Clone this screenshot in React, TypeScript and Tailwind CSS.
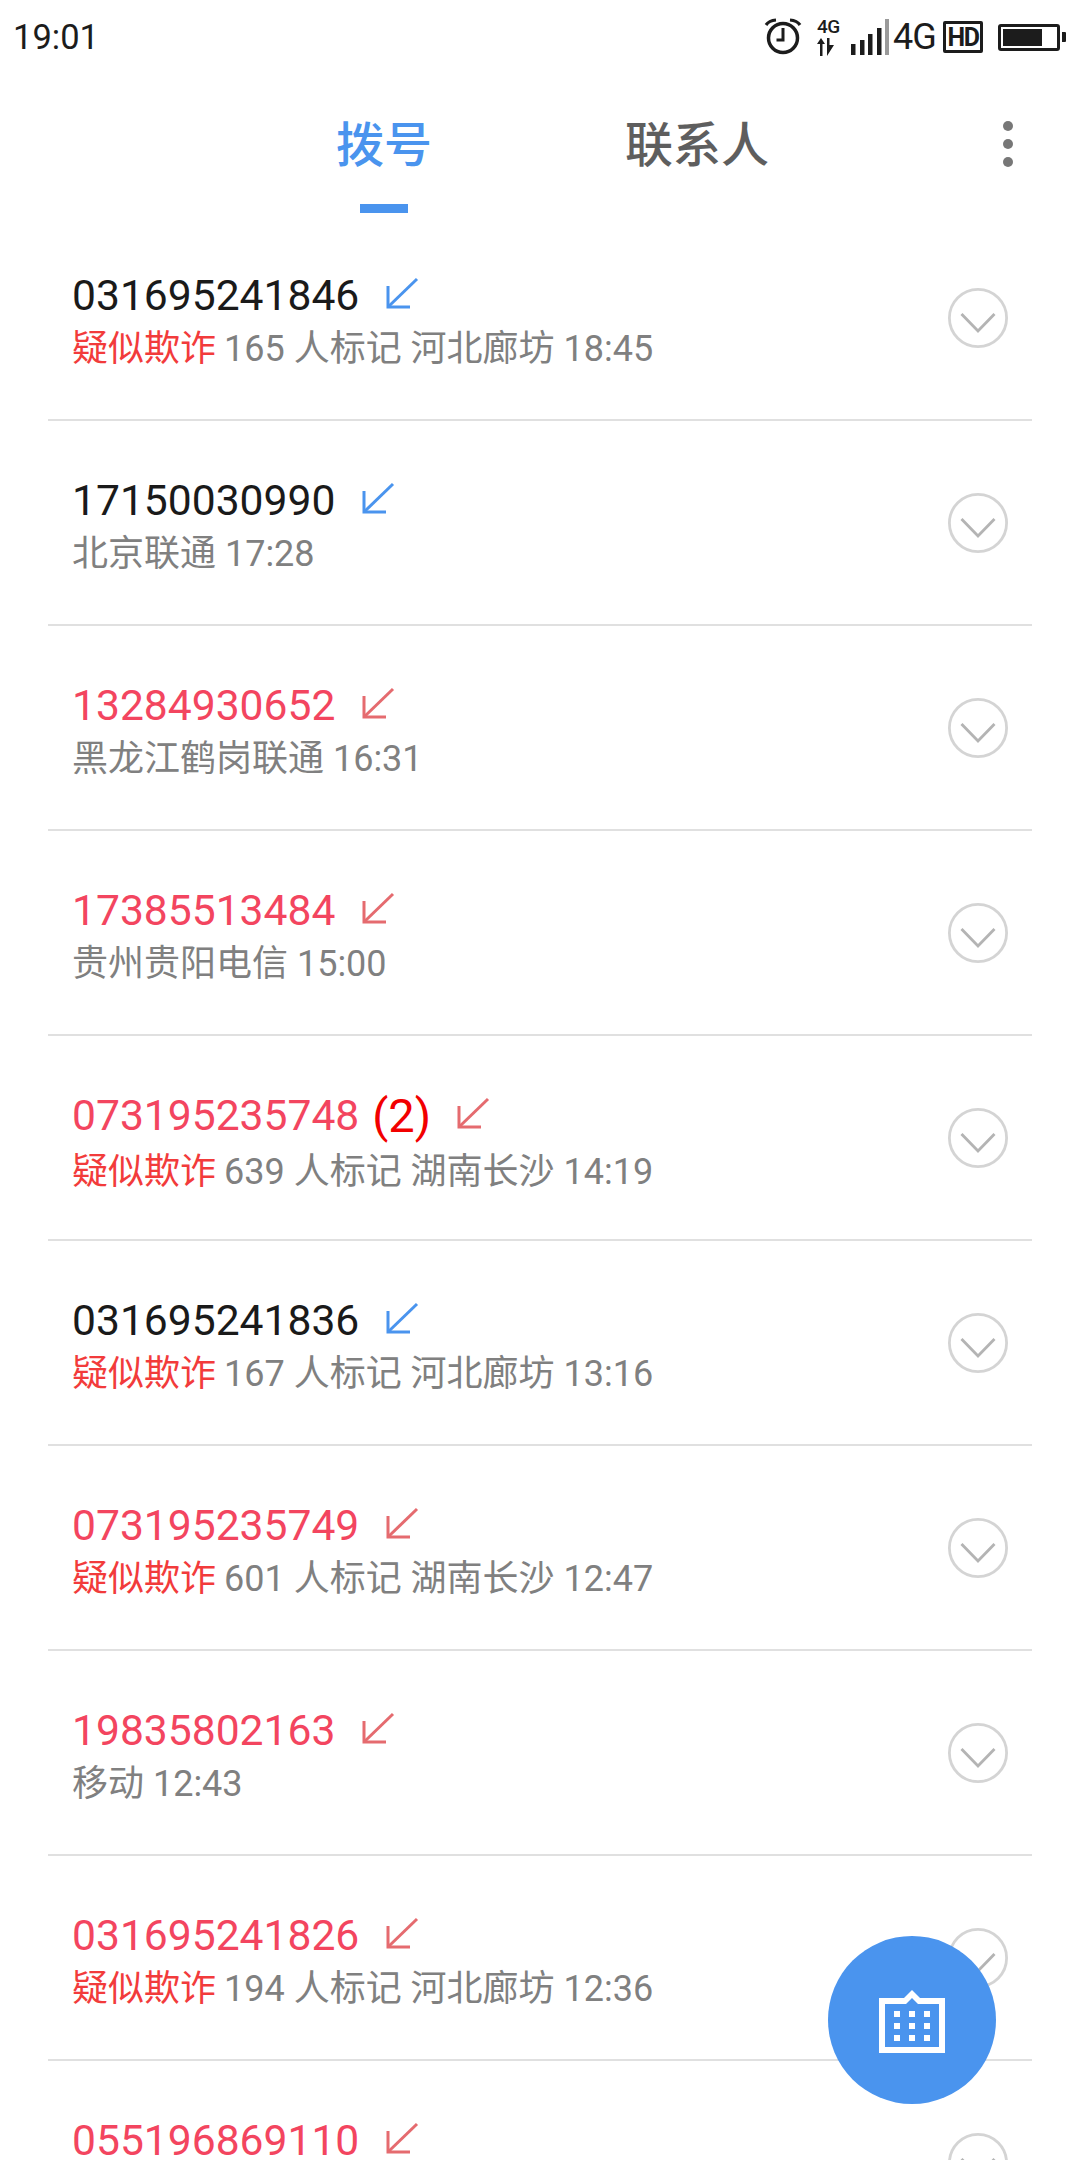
const calls = [
  { num: '031695241846', missed: false, fraud: true, sub: '165 人标记 河北廊坊 18:45' },
  { num: '17150030990', missed: false, sub: '北京联通 17:28' },
  { num: '13284930652', missed: true, sub: '黑龙江鹤岗联通 16:31' },
  { num: '17385513484', missed: true, sub: '贵州贵阳电信 15:00' },
  { num: '073195235748', missed: true, count: 2, fraud: true, sub: '639 人标记 湖南长沙 14:19' },
  { num: '031695241836', missed: false, fraud: true, sub: '167 人标记 河北廊坊 13:16' },
  { num: '073195235749', missed: true, fraud: true, sub: '601 人标记 湖南长沙 12:47' },
  { num: '19835802163', missed: true, sub: '移动 12:43' },
  { num: '031695241826', missed: true, fraud: true, sub: '194 人标记 河北廊坊 12:36' },
  { num: '055196869110', missed: true, sub: '' },
];

function Arrow({ color }: { color: string }) {
  return (
    <svg width="34" height="34" viewBox="0 0 34 34" fill="none" stroke={color} strokeWidth="3">
      <path d="M32 3 L3 31" />
      <path d="M3 10 V31 H25" />
    </svg>
  );
}

function Chevron() {
  return (
    <svg width="60" height="60" viewBox="0 0 60 60" fill="none">
      <circle cx="30" cy="30" r="28.6" stroke="#d4d4d4" strokeWidth="2.8" />
      <path d="M13.5 26 L30 43 L46.5 26" stroke="#b4b4b4" strokeWidth="2.8" />
    </svg>
  );
}

function StatusIcons() {
  return (
    <div className="flex items-center text-[#1c1c1c]">
      <svg width="38" height="38" viewBox="0 0 38 38" fill="none" stroke="#1c1c1c" className="mr-[15px]">
        <circle cx="19" cy="20" r="14.5" strokeWidth="3.5" />
        <path d="M19 10 V22 H12.5" strokeWidth="3" />
        <path d="M2 7 Q5 2.5 12 2" strokeWidth="3.2" />
        <path d="M36 7 Q33 2.5 26 2" strokeWidth="3.2" />
      </svg>
      <div className="flex flex-col items-start w-[25px] mr-[9px]">
        <span className="text-[19px] leading-[17px] font-medium tracking-[-0.5px]">4G</span>
        <svg width="18" height="18" viewBox="0 0 18 18" fill="#1c1c1c" className="mt-[3px]">
          <path d="M4 0 L8 6 H5.5 V18 H3 V6 H0 Z" />
          <path d="M10 0 H12.5 V7 H17 L10 18 Z" />
        </svg>
      </div>
      <svg width="38" height="36" viewBox="0 0 38 36" fill="#1c1c1c" className="mr-[4px]">
        <rect x="0" y="25" width="4.5" height="11" />
        <rect x="9" y="21" width="4.5" height="15" />
        <rect x="17" y="15" width="4.5" height="21" />
        <rect x="26" y="9" width="4.5" height="27" />
        <rect x="34" y="0" width="4" height="36" fill="#9a9a9a" />
      </svg>
      <span className="text-[36px] leading-[36px] font-normal w-[45px] tracking-[-1px]">4G</span>
      <div className="ml-[5px] w-[40px] h-[32px] border-[3px] border-[#1c1c1c] rounded-[2px] flex items-center justify-center text-[25px] leading-none font-bold tracking-[-1.5px]">
        HD
      </div>
      <div className="ml-[15px] w-[62px] h-[27px] border-[3px] border-[#1c1c1c] rounded-[3px] p-[2px]">
        <div className="w-[39px] h-full bg-[#1c1c1c]" />
      </div>
      <div className="ml-[2px] w-[4px] h-[10px] bg-[#1c1c1c] rounded-r-[1px]" />
    </div>
  );
}

export default function App() {
  return (
    <div
      className="relative w-[1080px] h-[2160px] overflow-hidden bg-white"
      style={{ fontFamily: 'Roboto, "Noto Sans CJK SC", sans-serif' }}
    >
      <div className="h-[74px] pl-[13px] pr-[14px] flex items-center justify-between">
        <span className="text-[34.5px] leading-none text-[#1c1c1c]">19:01</span>
        <StatusIcons />
      </div>

      <div className="relative h-[142px]">
        <div className="flex pl-[336px] pt-[42px] text-[48px] leading-[60px] font-medium">
          <div className="relative w-[289px] text-[#4a94ee]">
            拨号
            <div className="absolute left-[24px] top-[88px] w-[48px] h-[9px] bg-[#4a94ee]" />
          </div>
          <div className="text-[#5e5e5e]">联系人</div>
        </div>
        <div className="absolute left-[1003px] top-[47px] flex flex-col gap-[8px]">
          <div className="w-[10px] h-[10px] rounded-full bg-[#777777]" />
          <div className="w-[10px] h-[10px] rounded-full bg-[#777777]" />
          <div className="w-[10px] h-[10px] rounded-full bg-[#777777]" />
        </div>
      </div>

      <div className="mx-[48px]">
        {calls.map((c) => (
          <div key={c.num} className="relative h-[205px] border-b-2 border-[#e0e0e0] pl-[24px] flex items-center justify-between">
            <div className="flex flex-col mt-[8px]">
              <div className={`flex items-center text-[42.6px] leading-none ${c.count ? 'h-[59px]' : 'h-[52px]'} ${c.missed ? 'text-[#f3455f]' : 'text-[#1a1a1a]'}`}>
                <span>{c.num}</span>
                {c.count ? <span className="ml-[13px] text-[47px] leading-none text-[#f20000]">({c.count})</span> : null}
                <span className={c.count ? 'ml-[25px] -mt-[5px]' : 'ml-[26px] -mt-[5px]'}>
                  <Arrow color={c.missed ? '#e56b6f' : '#4a94ee'} />
                </span>
              </div>
              <div className="mt-[2px] h-[50px] text-[36px] leading-[50px] text-[#808080] whitespace-nowrap">
                {c.fraud ? <span className="text-[#f23b3b] mr-[8px]">疑似欺诈</span> : null}
                {c.sub}
              </div>
            </div>
            <div className="mr-[24px] mt-[1px]">
              <Chevron />
            </div>
          </div>
        ))}
      </div>

      <div className="absolute left-[828px] top-[1936px] w-[168px] h-[168px] rounded-full bg-[#4a94ee] flex items-center justify-center">
        <svg width="68" height="64" viewBox="0 0 68 64" fill="white" className="mt-[2px]">
          <path
            fillRule="evenodd"
            d="M1 9 H26 L34 1 L42 9 H67 V64 H1 Z M7 15 V58 H61 V15 H40 L34 9 L28 15 Z"
          />
          <rect x="16" y="22" width="6" height="6" />
          <rect x="31" y="22" width="6" height="6" />
          <rect x="46" y="22" width="6" height="6" />
          <rect x="16" y="34" width="6" height="6" />
          <rect x="31" y="34" width="6" height="6" />
          <rect x="46" y="34" width="6" height="6" />
          <rect x="16" y="46" width="6" height="6" />
          <rect x="31" y="46" width="6" height="6" />
          <rect x="46" y="46" width="6" height="6" />
        </svg>
      </div>
    </div>
  );
}
